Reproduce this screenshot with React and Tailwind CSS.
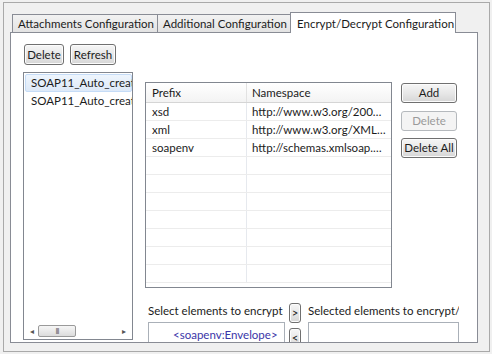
import React from 'react';

const FONT = { fontFamily: 'Lato, "Open Sans", sans-serif' };

const ROWS = [
  { prefix: 'xsd', ns: 'http://www.w3.org/2001/XMLSchema' },
  { prefix: 'xml', ns: 'http://www.w3.org/XML/1998/namespace' },
  { prefix: 'soapenv', ns: 'http://schemas.xmlsoap.org/soap/envelope/' },
];

const EMPTY_ROWS = 7;

// Windows 7 style push button
const WinButton = ({ children, className = '', disabled }) => (
  <div
    className={
      'flex items-center justify-center whitespace-nowrap rounded-[3px] border text-[11.5px] leading-none ' +
      (disabled
        ? 'border-[#b5b9bd] bg-[#f4f4f4] text-[#9a9a9a] '
        : 'border-[#707070] bg-gradient-to-b from-[#f6f6f6] via-[#e8e8e8] to-[#d6d6d6] text-[#1b1b1b] shadow-[inset_0_0_0_1px_#fcfcfc] ') +
      className
    }
  >
    {children}
  </div>
);

const Tab = ({ label, active, className = '' }) =>
  active ? (
    <div className={'relative z-10 -mb-px flex h-[21px] items-start whitespace-nowrap border border-b-0 border-[#898c95] bg-white pl-[6px] pt-[2px] text-[11.5px] text-[#1b1b1b] ' + className}>
      {label}
    </div>
  ) : (
    <div className={'flex h-[18px] items-center whitespace-nowrap border border-b-0 border-[#898c95] bg-gradient-to-b from-[#f2f2f2] to-[#e3e3e3] pl-[5px] text-[11.5px] text-[#1b1b1b] ' + className}>
      {label}
    </div>
  );

const NamespaceTable = () => (
  <div className="h-[206px] w-[247px] overflow-hidden border border-[#828790] bg-white text-[11.5px] text-[#1b1b1b]">
    <div className="flex h-[20px] border-b border-[#d5d5d5] bg-gradient-to-b from-white to-[#f3f3f3]">
      <div className="flex w-[101px] items-center border-r border-[#e2e2e2] pl-[6px]">Prefix</div>
      <div className="flex flex-1 items-center pl-[5px]">Namespace</div>
    </div>
    {ROWS.map((r) => (
      <div key={r.prefix} className="flex h-[18px] border-b border-[#ececec]">
        <div className="flex w-[101px] items-center border-r border-[#e6e9ee] pl-[6px]">{r.prefix}</div>
        <div className="flex min-w-0 flex-1 items-center pl-[5px] pr-[4px]">
          <span className="truncate">{r.ns}</span>
        </div>
      </div>
    ))}
    {Array.from({ length: EMPTY_ROWS }).map((_, i) => (
      <div key={i} className="flex h-[18px] border-b border-[#ececec]">
        <div className="w-[101px] border-r border-[#e6e9ee]" />
        <div className="flex-1" />
      </div>
    ))}
  </div>
);

const ScrollBar = () => (
  <div className="flex h-[16px] items-center bg-white px-[4px] text-[8px] text-[#555]">
    <span className="w-[8px] text-center">◂</span>
    <div className="ml-[2px] flex h-[12px] w-[38px] items-center justify-center rounded-[2px] border border-[#9a9a9a] bg-gradient-to-b from-[#f6f6f6] to-[#dcdcdc] text-[7px] tracking-[-1px] text-[#666]">
      III
    </div>
    <div className="flex-1" />
    <span className="w-[8px] text-center">▸</span>
  </div>
);

export default function App() {
  return (
    <div className="h-[354px] w-[492px] overflow-hidden bg-[#f0f0f0] pl-[3px] pt-[2px]" style={FONT}>
      <div className="h-[350px] w-[487px] border border-[#a9a9a9] pl-[6px] pt-[9px]">
        {/* tabs */}
        <div className="flex h-[20px] items-end pl-[2px]">
          <Tab label="Attachments Configuration" className="w-[146px]" />
          <Tab label="Additional Configuration" className="-ml-px w-[134px]" />
          <Tab label="Encrypt/Decrypt Configuration" active className="-ml-px w-[166px]" />
        </div>

        {/* panel */}
        <div className="h-[311px] w-[468px] overflow-hidden border border-[#898c95] bg-white pl-[12px] pt-[11px]">
          <div className="flex gap-[6px] pl-[1px]">
            <WinButton className="h-[21px] w-[40px]">Delete</WinButton>
            <WinButton className="h-[21px] w-[46px]">Refresh</WinButton>
          </div>

          <div className="mt-[7px] flex">
            {/* service list */}
            <div className="flex h-[268px] w-[110px] flex-col border border-[#828790] bg-white">
              <div className="flex-1 overflow-hidden pl-[1px] pt-[1px] text-[11.5px] text-[#1b1b1b]">
                <div className="flex h-[18px] items-center whitespace-nowrap rounded-[2px] border border-[#c5dcf7] bg-gradient-to-b from-[#eef5fd] to-[#dde9f8] pl-[5px]">
                  SOAP11_Auto_created
                </div>
                <div className="flex h-[17px] items-center whitespace-nowrap pl-[6px]">SOAP11_Auto_created</div>
              </div>
              <ScrollBar />
            </div>

            <div className="ml-[12px] flex flex-col">
              <div className="mt-[10px] flex">
                <NamespaceTable />
                <div className="ml-[9px] mt-[1px] flex flex-col">
                  <WinButton className="h-[20px] w-[56px]">Add</WinButton>
                  <WinButton disabled className="mt-[8px] h-[20px] w-[56px]">Delete</WinButton>
                  <WinButton className="mt-[7px] h-[20px] w-[56px]">Delete All</WinButton>
                </div>
              </div>

              {/* element selectors */}
              <div className="mt-[15px] flex pl-[3px] text-[11.5px] text-[#1b1b1b]">
                <div className="w-[137px]">
                  <div className="h-[16px] overflow-hidden whitespace-nowrap leading-[16px]">Select elements to encrypt</div>
                  <div className="mt-[3px] h-[30px] border border-[#aab0b8] pt-[3px] pl-[24px] text-[#3a35a8]">
                    &lt;soapenv:Envelope&gt;
                  </div>
                </div>
                <div className="ml-[4px] flex w-[12px] flex-col">
                  <WinButton className="h-[20px] w-[12px] text-[8px]">&gt;</WinButton>
                  <WinButton className="mt-[5px] h-[20px] w-[12px] text-[8px]">&lt;</WinButton>
                </div>
                <div className="ml-[7px] w-[151px]">
                  <div className="h-[16px] overflow-hidden whitespace-nowrap leading-[16px]">Selected elements to encrypt/decrypt</div>
                  <div className="mt-[3px] h-[30px] border border-[#aab0b8]" />
                </div>
              </div>
            </div>
          </div>
        </div>
      </div>
    </div>
  );
}
